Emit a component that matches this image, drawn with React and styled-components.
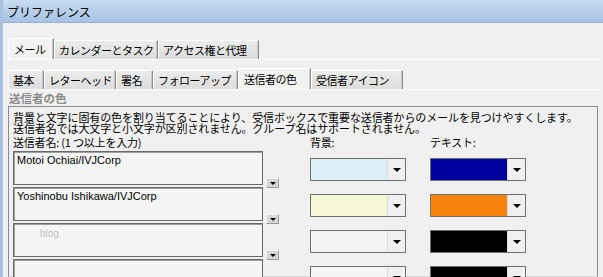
import React from "react"
import styled, { createGlobalStyle } from "styled-components"

const GlobalStyle = createGlobalStyle`
  html, body {
    margin: 0;
    padding: 0;
    background: #f0f0f0;
  }
  body {
    font-family: "Noto Sans CJK JP", "Liberation Sans", sans-serif;
    font-size: 11px;
    color: #000;
  }
`

const Window = styled.div`
  width: 603px;
  height: 277px;
  overflow: hidden;
  box-sizing: border-box;
  border-left: 3px solid #a7c1df;
  background: #f0f0f0;
  display: flex;
  flex-direction: column;
`

const TitleBar = styled.div`
  height: 23px;
  flex-shrink: 0;
  box-sizing: border-box;
  padding-left: 4px;
  display: flex;
  align-items: center;
  font-size: 12px;
  background: linear-gradient(#c9dcf0, #a6c2e3);
  border-bottom: 1px solid #96b2d4;
`

const Body = styled.div`
  flex: 1;
  display: flex;
  flex-direction: column;
  padding: 15px 3px 0 5px;
  min-height: 0;
`

const TabRow = styled.div`
  display: flex;
  align-items: flex-end;
  height: 21px;
  margin-top: ${({ gap }) => gap || 0}px;
  border-bottom: 1px solid #fbfbfb;
  flex-shrink: 0;
`

const Tab = styled.div`
  box-sizing: border-box;
  width: ${({ w }) => w}px;
  height: ${({ active }) => (active ? "100%" : "calc(100% - 2px)")};
  display: flex;
  align-items: center;
  padding-left: ${({ active }) => (active ? 5 : 4)}px;
  font-size: 11px;
  letter-spacing: -0.5px;
  white-space: nowrap;
  overflow: hidden;
  background: ${({ active }) =>
    active ? "#f2f2f2" : "linear-gradient(#ececec, #dcdcdc)"};
  border-top: 1px solid #fdfdfd;
  border-left: 1px solid #ffffff;
  border-right: 1px solid #8c8c8c;
  box-shadow: inset -1px 0 0 #c8c8c8;
`

const SectionTitle = styled.div`
  margin-top: 2px;
  padding-left: 1px;
  font-size: 11.5px;
  font-weight: bold;
  color: #8a8a8a;
  line-height: 13px;
  flex-shrink: 0;
`

const Panel = styled.div`
  flex: 1;
  margin-top: 1px;
  margin-right: 2px;
  border: 1px solid #8a8a8a;
  border-bottom-color: #d8d8d8;
  box-sizing: border-box;
  padding: 5px 0 0 4px;
  display: flex;
  flex-direction: column;
  min-height: 0;
`

const Description = styled.div`
  font-size: 11px;
  line-height: 10.5px;
  letter-spacing: -0.1px;
  white-space: nowrap;
`

const Grid = styled.div`
  display: grid;
  grid-template-columns: 250px 13px 96px 96px;
  column-gap: 3px;
  grid-auto-rows: ${({ row }) => row}px;
  margin-top: ${({ gap }) => gap}px;
  & > *:nth-child(4n + 3) {
    margin-left: 28px;
  }
  & > *:nth-child(4n) {
    margin-left: 49px;
  }
`

const Label = styled.div`
  font-size: 11px;
  line-height: 12px;
  letter-spacing: -0.2px;
  white-space: nowrap;
  align-self: start;
`

const NameBox = styled.div`
  box-sizing: border-box;
  height: 34px;
  background: #f5f5f5;
  border: 1px solid #6a6a6a;
  box-shadow: inset 1px 1px 0 #a0a0a0;
  padding: 2px 3px;
  font-family: "Liberation Sans", "Noto Sans CJK JP", sans-serif;
  font-size: ${({ faint }) => (faint ? 10 : 11)}px;
  line-height: 12px;
  color: ${({ faint }) => (faint ? "#c2c2c2" : "#000")};
  padding-left: ${({ faint }) => (faint ? 26 : 3)}px;
  padding-top: ${({ faint }) => (faint ? 4 : 2)}px;
`

const MiniButton = styled.div`
  align-self: start;
  margin-top: 27px;
  box-sizing: border-box;
  width: 13px;
  height: 10px;
  background: #d6d6d6;
  border: 1px solid #9a9a9a;
  border-top-color: #f4f4f4;
  border-left-color: #f4f4f4;
  display: flex;
  align-items: center;
  justify-content: center;
`

const Arrow = styled.span`
  width: 0;
  height: 0;
  border-left: ${({ s }) => s}px solid transparent;
  border-right: ${({ s }) => s}px solid transparent;
  border-top: ${({ s }) => s}px solid #000;
`

const Combo = styled.div`
  align-self: start;
  margin-top: 7px;
  box-sizing: border-box;
  width: 96px;
  height: 23px;
  border: 1px solid #6f6f6f;
  box-shadow: inset 0 0 0 1px ${({ edge }) => edge};
  display: flex;
`

const Swatch = styled.div`
  flex: 1;
  background: ${({ color }) => color};
`

const ComboButton = styled.div`
  width: 17px;
  background: #f0f0f0;
  border-left: 1px solid #dcdcdc;
  display: flex;
  align-items: center;
  justify-content: center;
`

const rows = [
  { name: "Motoi Ochiai/IVJCorp", bg: "#dceef6", fg: "#00009f", fgEdge: "#4a4aa8" },
  { name: "Yoshinobu Ishikawa/IVJCorp", bg: "#f5f7d5", fg: "#f7840a", fgEdge: "#c86a08" },
  { name: "blog", faint: true, bg: "#f4f4f4", fg: "#000000", fgEdge: "#000000" },
  { name: "", bg: "#f4f4f4", fg: "#000000", fgEdge: "#000000" },
]

const topTabs = [
  { label: "メール", w: 46, active: true },
  { label: "カレンダーとタスク", w: 104 },
  { label: "アクセス権と代理", w: 101 },
]

const subTabs = [
  { label: "基本", w: 36 },
  { label: "レターヘッド", w: 72 },
  { label: "署名", w: 37 },
  { label: "フォローアップ", w: 85 },
  { label: "送信者の色", w: 73, active: true },
  { label: "受信者アイコン", w: 92 },
]

const ColorCombo = ({ color, edge }) => (
  <Combo edge={edge}>
    <Swatch color={color} />
    <ComboButton>
      <Arrow s={4} />
    </ComboButton>
  </Combo>
)

export default function App() {
  return (
    <>
      <GlobalStyle />
      <Window>
        <TitleBar>プリファレンス</TitleBar>
        <Body>
          <TabRow>
            {topTabs.map(t => (
              <Tab key={t.label} w={t.w} active={t.active}>
                {t.label}
              </Tab>
            ))}
          </TabRow>
          <TabRow gap={8}>
            {subTabs.map(t => (
              <Tab key={t.label} w={t.w} active={t.active}>
                {t.label}
              </Tab>
            ))}
          </TabRow>
          <SectionTitle>送信者の色</SectionTitle>
          <Panel>
            <Description>
              背景と文字に固有の色を割り当てることにより、受信ボックスで重要な送信者からのメールを見つけやすくします。
              <br />
              送信者名では大文字と小文字が区別されません。グループ名はサポートされません。
            </Description>
            <Grid row={16} gap={3}>
              <Label>送信者名: (1 つ以上を入力)</Label>
              <span />
              <Label>背景:</Label>
              <Label>テキスト:</Label>
            </Grid>
            <Grid row={36} gap={-1}>
              {rows.map((r, i) => (
                <React.Fragment key={i}>
                  <NameBox faint={r.faint}>{r.name}</NameBox>
                  <MiniButton>
                    <Arrow s={3} />
                  </MiniButton>
                  <ColorCombo color={r.bg} edge="transparent" />
                  <ColorCombo color={r.fg} edge={r.fgEdge} />
                </React.Fragment>
              ))}
            </Grid>
          </Panel>
        </Body>
      </Window>
    </>
  )
}
